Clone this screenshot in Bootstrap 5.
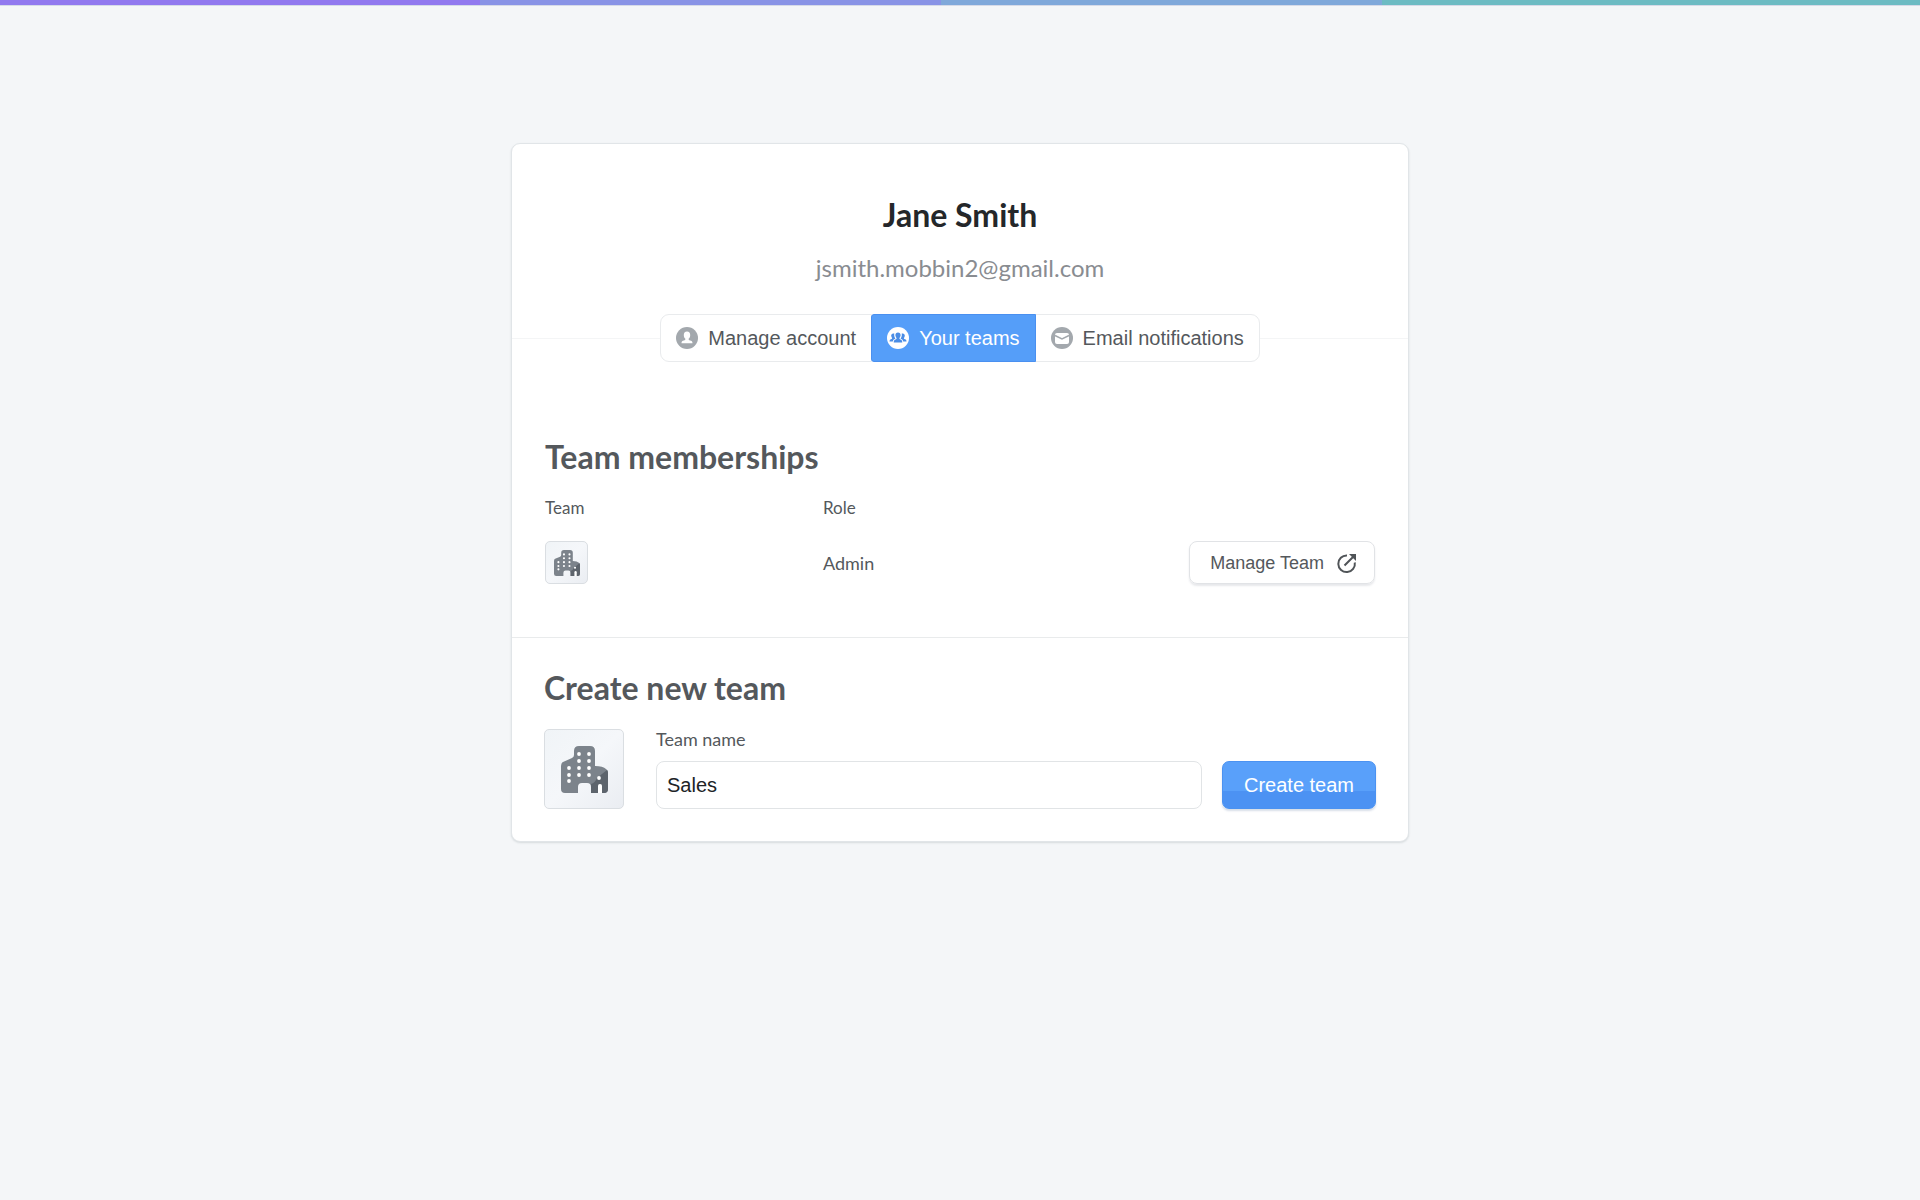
<!DOCTYPE html>
<html lang="en">
<head>
<meta charset="utf-8">
<meta name="viewport" content="width=device-width, initial-scale=1">
<title>Your teams</title>
<link href="https://cdn.jsdelivr.net/npm/bootstrap@5.3.0/dist/css/bootstrap.min.css" rel="stylesheet">
<style>
  body { background: #f4f6f8; color: #54585c; font-family: Lato, sans-serif; }
  .stripe { height: 6px; background: linear-gradient(90deg, #9179ef 0 25%, #8893e6 25% 49%, #7fa8da 49% 72%, #6cbbc3 72%); border-bottom: 1px solid #d5dae8; }
  .page-wrap { padding: 137px 16px 60px; }
  .panel { max-width: 898px; background: #fff; border: 1px solid #e1e5e8; border-radius: 9px; box-shadow: 0 1px 2px rgba(60,80,90,.16); }
  .panel-head { padding-top: 51px; }
  .person { font-size: 32px; line-height: 40px; font-weight: 700; color: #24272a; margin-bottom: 17px; }
  .mail { font-size: 24px; line-height: 32px; color: #898c91; margin-bottom: 30px; }
  .rule { height: 1px; background: #f4f5f6; }
  .ui-text { font-family: "Liberation Sans", Arial, sans-serif; }
  .tab-group .btn { display: flex; align-items: center; gap: 10px; height: 48px; padding: 0 15px; font-size: 20px; line-height: 24px; color: #54585c; background: #fff; border: 1px solid #e9ebed; border-radius: 9px; }
  .tab-group .btn.active { color: #fff; background: #559ef9; border-color: #4a90f0; border-radius: 3px; z-index: 2; }
  .section-title { font-size: 32px; line-height: 40px; font-weight: 700; margin: 0; }
  .memberships { padding: 75px 33px 53px; border-bottom: 1px solid #e9ebec; }
  .memberships table { margin-top: 19px; }
  .memberships th { font-weight: 400; font-size: 17px; line-height: 24px; padding: 0 0 21px; }
  .memberships td { font-size: 18px; line-height: 24px; padding: 0; vertical-align: middle; }
  .col-name { width: 278px; }
  .manage { width: fit-content; gap: 12px; font-size: 18px; line-height: 24px; height: 43px; padding: 0 16px 0 20px; color: #54585c; border: 1px solid #e1e3e6; border-radius: 8px; box-shadow: 0 2px 2px rgba(70,80,100,.13); }
  .tile { background: linear-gradient(135deg, #f0f4f7, #f5f7fa 50%, #eaedf2); border: 1px solid #dadee2; border-radius: 5px; display: flex; align-items: center; justify-content: center; flex: none; }
  .tile-sm { width: 43px; height: 43px; }
  .tile-lg { width: 80px; height: 80px; }
  .create { padding: 30px 32px 32px; }
  .create-row { margin-top: 21px; }
  .create label { font-size: 18px; line-height: 20px; margin-bottom: 12px; display: block; }
  .create .form-control { height: 48px; padding: 0 10px; font-size: 20px; line-height: 24px; color: #202326; border-color: #e1e4e6; border-radius: 8px; }
  .team-field { margin-left: 32px; margin-right: 20px; }
  .go { width: 154px; height: 48px; padding: 0; font-size: 20px; line-height: 24px; color: #fff; border: 1px solid #4b92f1; border-radius: 7px; background: linear-gradient(#59a0fa 0 62%, #4c92f3 62% 100%); box-shadow: 0 2px 2px rgba(60,90,140,.2); }
</style>
<script src="https://cdn.jsdelivr.net/npm/bootstrap@5.3.0/dist/js/bootstrap.bundle.min.js"></script>
</head>
<body>
<svg class="d-none" aria-hidden="true">
  <symbol id="building" viewBox="0 0 47 47">
    <path fill="#7c838b" d="M0 20q0-3 2-4l9-4q2-1 2-3V5q0-5 5-5h11q5 0 5 5v15q8 0 11 3 2 1 2 4v16q0 4-4 4H30V41q0-4-4-4h-5q-4 0-4 4v6H4q-4 0-4-4z"/>
    <path fill="#5d646c" d="M30 38q4-1 6-6l10-8q1 1 1 3v16q0 4-4 4h-2v-7q0-2-2-2t-2 2v7h-7z"/>
    <path fill="#fff" d="M37 47v-7q0-2 2-2t2 2v7z"/>
    <g fill="#fff"><circle cx="18" cy="8" r="1.900"/><circle cx="28" cy="8" r="1.900"/><circle cx="18" cy="15" r="1.900"/><circle cx="28" cy="15" r="1.900"/><circle cx="8" cy="22" r="1.900"/><circle cx="18" cy="22" r="1.900"/><circle cx="28" cy="22" r="1.900"/><circle cx="8" cy="29" r="1.900"/><circle cx="18" cy="29" r="1.900"/><circle cx="28" cy="29" r="1.900"/><circle cx="8" cy="35" r="1.900"/><circle cx="38" cy="32" r="1.900"/></g>
  </symbol>
</svg>
<div class="stripe"></div>
<main class="page-wrap">
  <div class="panel mx-auto">
    <header class="panel-head text-center">
      <h1 class="person">Jane Smith</h1>
      <p class="mail">jsmith.mobbin2@gmail.com</p>
      <div class="d-flex align-items-center">
        <div class="rule flex-fill"></div>
        <nav class="btn-group tab-group ui-text" aria-label="Account sections">
          <a class="btn" href="#account">
            <svg width="22" height="22" viewBox="0 0 22 22"><circle cx="11" cy="11" r="11" fill="#a3a8ad"/><path fill="#fff" d="M11 4.500c2.200 0 3.300 1.500 3.200 3.700-.1 1.700-.7 2.800-1.600 3.600 0 1.200.4 1.500 1.500 1.800 1.500.4 2.400.9 2.400 2.600h-11c0-1.700.9-2.200 2.400-2.600 1.100-.3 1.500-.6 1.500-1.800C8.500 11 7.900 9.900 7.800 8.200 7.700 6 8.800 4.500 11 4.500z"/></svg>
            Manage account</a>
          <a class="btn active" href="#teams" aria-current="page">
            <svg width="22" height="22" viewBox="0 0 22 22"><circle cx="11" cy="11" r="11" fill="#fff"/><g fill="#4a8de6"><path d="M11 5.500c1.700 0 2.700 1.100 2.600 2.800-.1 1.300-.6 2-1.200 2.700 0 .9.300 1.200 1.100 1.500 1.300.5 1.800 1.300 1.800 3H6.700c0-1.700.5-2.500 1.800-3 .8-.3 1.100-.6 1.100-1.500-.6-.7-1.100-1.400-1.200-2.700C8.300 6.600 9.300 5.500 11 5.500z"/><path d="M7.300 6.600C5.500 5.900 4.100 7 4.200 8.800c.1 1 .4 1.600.9 2.100 0 .8-.2 1-1.100 1.300-1 .4-1.500 1-1.500 2.400h3.300c.2-1.300.9-2.300 2.600-2.800-1-1.500-1.500-3.300-1.100-5.200z"/><path d="M14.700 6.600c1.800-.7 3.200.4 3.100 2.200-.1 1-.4 1.600-.9 2.100 0 .8.200 1 1.100 1.300 1 .4 1.500 1 1.500 2.400h-3.300c-.2-1.300-.9-2.300-2.600-2.800 1-1.500 1.500-3.300 1.100-5.200z"/></g></svg>
            Your teams</a>
          <a class="btn" href="#email">
            <svg width="22" height="22" viewBox="0 0 22 22"><circle cx="11" cy="11" r="11" fill="#a3a8ad"/><rect x="4" y="6" width="14" height="11" rx="2" fill="#fff"/><path d="M4 8.500l7 3.500 7-3.500" fill="none" stroke="#a3a8ad" stroke-width="1.500"/></svg>
            Email notifications</a>
        </nav>
        <div class="rule flex-fill"></div>
      </div>
    </header>
    <section class="memberships">
      <h2 class="section-title">Team memberships</h2>
      <table class="w-100">
        <thead><tr><th scope="col" class="col-name">Team</th><th scope="col">Role</th><td></td></tr></thead>
        <tbody><tr>
          <td><div class="tile tile-sm"><svg width="26" height="26" aria-label="Team picture"><use href="#building"/></svg></div></td>
          <td>Admin</td>
          <td><a class="btn manage ui-text d-flex align-items-center ms-auto" href="#manage">Manage Team
            <svg width="22" height="22" viewBox="0 0 22 22" fill="none" stroke="#505458" stroke-width="2"><path d="M11 3.500A8.300 8.300 0 1 0 18.800 10.500M8.500 13.500l9-9"/><path d="M13 2h7v7z" fill="#505458" stroke="none"/></svg></a></td>
        </tr></tbody>
      </table>
    </section>
    <section class="create">
      <h2 class="section-title">Create new team</h2>
      <form class="create-row d-flex align-items-end">
        <div class="tile tile-lg"><svg width="47" height="47" aria-label="Team picture"><use href="#building"/></svg></div>
        <div class="team-field flex-fill">
          <label for="teamName">Team name</label>
          <input id="teamName" class="form-control ui-text" type="text" value="Sales">
        </div>
        <button class="btn go ui-text" type="button">Create team</button>
      </form>
    </section>
  </div>
</main>
</body>
</html>
